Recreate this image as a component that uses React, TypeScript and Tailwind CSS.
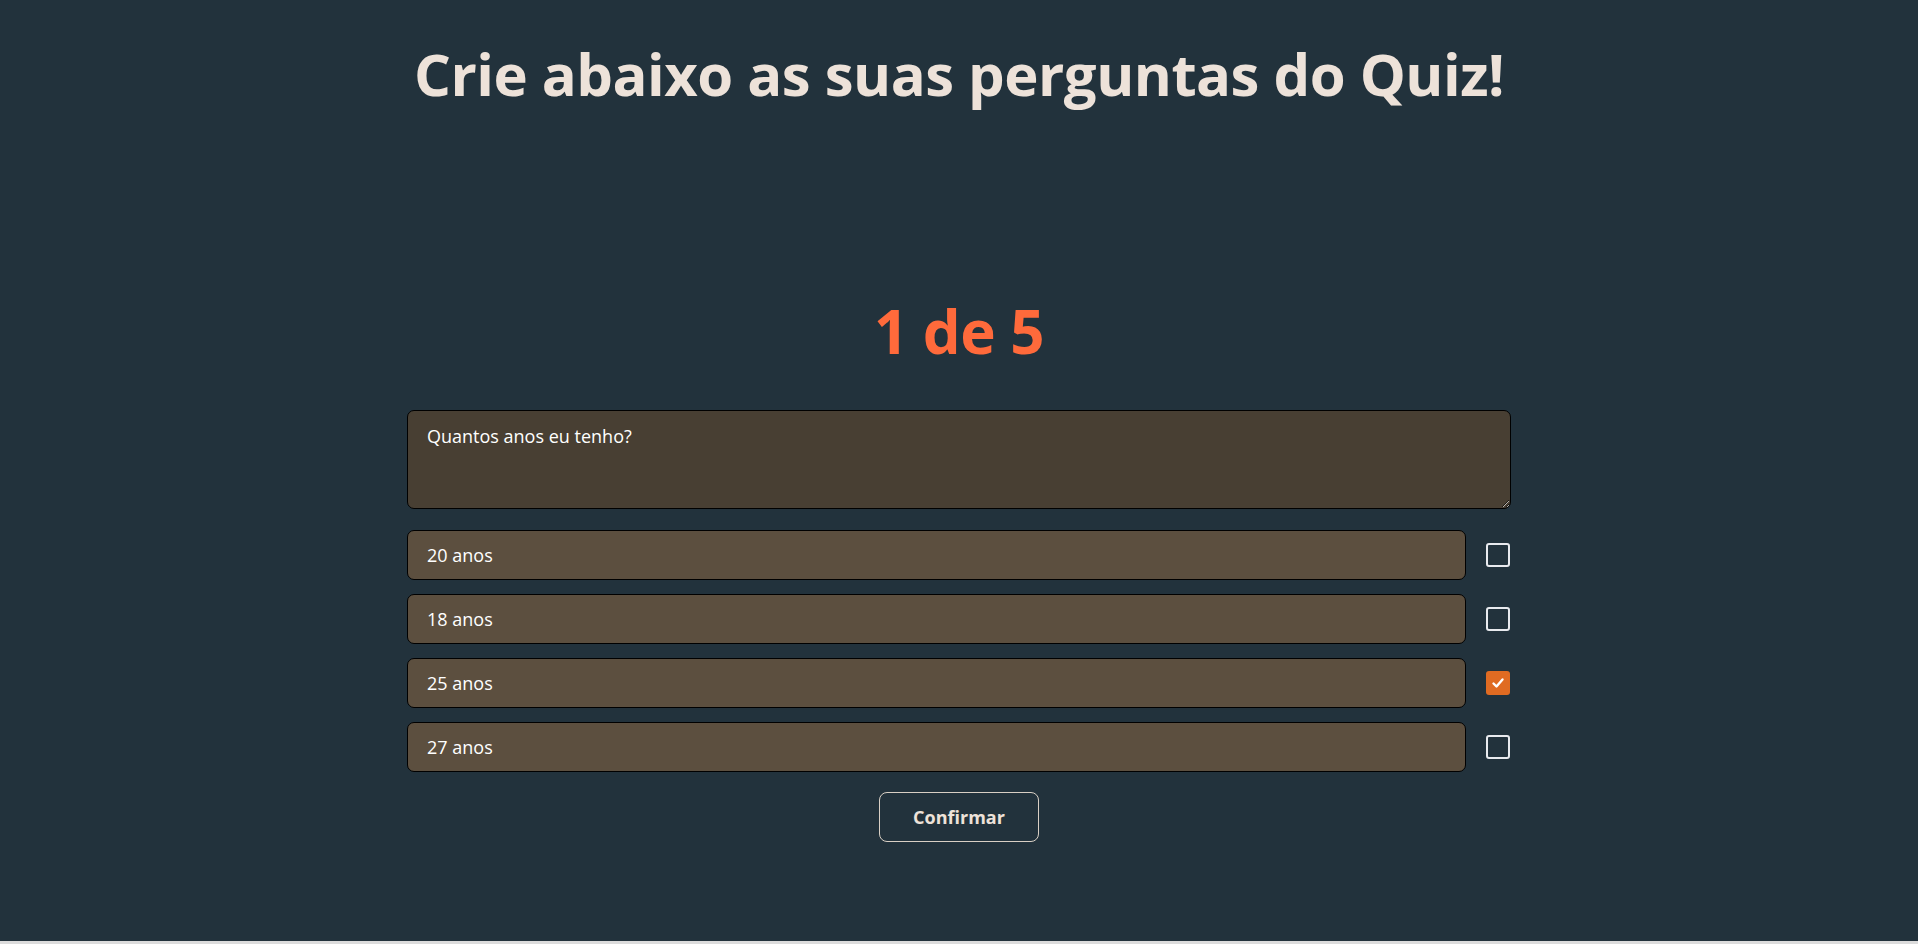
import React from "react";

const answers = [
  { text: "20 anos", checked: false },
  { text: "18 anos", checked: false },
  { text: "25 anos", checked: true },
  { text: "27 anos", checked: false },
];

function Box({ checked }: { checked: boolean }) {
  if (checked) {
    return (
      <div className="w-[24px] h-[24px] rounded-[3px] bg-[#e06b22] flex items-center justify-center shrink-0">
        <svg width="16" height="16" viewBox="0 0 16 16" fill="none">
          <path d="M3.5 8.5l3 3 6-7" stroke="#fff" strokeWidth="2.4" strokeLinecap="round" strokeLinejoin="round" />
        </svg>
      </div>
    );
  }
  return <div className="w-[24px] h-[24px] rounded-[3px] border-2 border-[#e8eaee] shrink-0" />;
}

export default function App() {
  return (
    <div className="w-full" style={{ fontFamily: '"Open Sans", "Noto Sans", sans-serif' }}>
      <div className="h-[941px] bg-[#22323c] flex flex-col items-center">
        <h1 className="pt-[39px] text-[58px] leading-[70px] font-bold text-[#ede2d9] tracking-[-0.5px]">
          Crie abaixo as suas perguntas do Quiz!
        </h1>
        <div className="mt-[186px] text-[60px] leading-[72px] font-bold text-[#ff6a3b] tracking-[-0.5px]">1 de 5</div>
        <div className="mt-[43px] w-[1104px] flex flex-col">
          <textarea
            className="w-full h-[99px] bg-[#483f33] border border-black rounded-[7px] px-[19px] py-[12px] text-[18px] leading-[26px] text-white outline-none"
            defaultValue="Quantos anos eu tenho?"
          />
          <div className="mt-[21px] flex flex-col gap-[14px]">
            {answers.map((a) => (
              <div key={a.text} className="flex items-center gap-[20px]">
                <div className="w-[1059px] h-[50px] bg-[#5c4f3f] border border-black rounded-[7px] px-[19px] flex items-center text-[18px] text-white">
                  {a.text}
                </div>
                <Box checked={a.checked} />
              </div>
            ))}
          </div>
          <div className="mt-[20px] flex justify-center">
            <button className="w-[160px] h-[50px] border border-[#d9d0c5] rounded-[8px] text-[18px] font-bold text-[#ede2d9]">
              Confirmar
            </button>
          </div>
        </div>
      </div>
      <div className="h-[3px] bg-[#dcdcdc]" />
    </div>
  );
}
